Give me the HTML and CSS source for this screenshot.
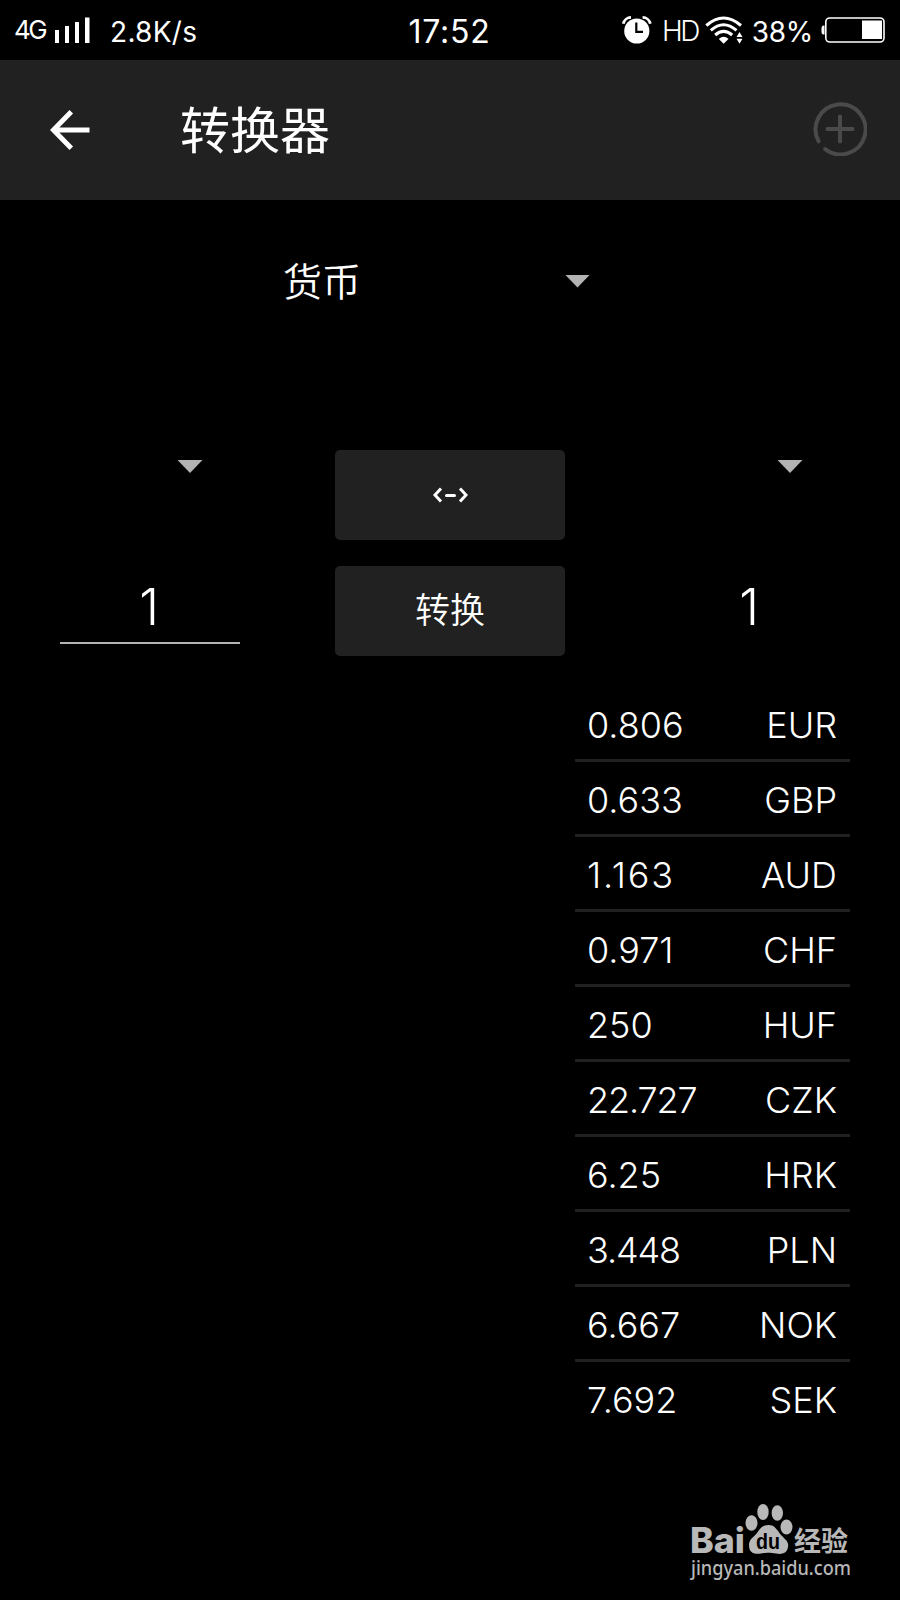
FILE: index.html
```html
<!DOCTYPE html>
<html lang="zh-CN">
<head>
    <meta charset="UTF-8">
    <meta name="viewport" content="width=device-width, initial-scale=1.0">
    <title>转换器</title>
    <link rel="stylesheet" href="styles.css">
</head>
<body>
    <div class="status-bar">
        <div class="status-left">
            <span class="network">4G</span>
            <svg class="signal" width="35" height="26" viewBox="0 0 35 26" fill="#fff">
                <rect x="0" y="13" width="4" height="13"/>
                <rect x="10" y="9" width="4" height="17"/>
                <rect x="20" y="5" width="4" height="21"/>
                <rect x="30" y="0.5" width="4.5" height="25.5"/>
            </svg>
            <span class="speed">2.8K/s</span>
        </div>
        <div class="time">17:52</div>
        <div class="status-right">
            <svg class="alarm" width="30" height="28" viewBox="0 0 30 28">
                <circle cx="14.8" cy="15" r="12.6" fill="#fff"/>
                <path d="M1.3 7.8A8 8 0 0 1 9 1.4M20.6 1.4A8 8 0 0 1 28.3 7.8" fill="none" stroke="#fff" stroke-width="2.8"/>
                <path d="M14.3 6.5V15.8H21" fill="none" stroke="#000" stroke-width="2.2"/>
            </svg>
            <span class="hd">HD</span>
            <svg class="wifi" width="39" height="28" viewBox="0 0 39 28">
                <path d="M1.3 9.5Q18.5 -5.5 36 9.5M5.8 14.4Q18.5 3.2 31.5 14.4M10.2 19Q18.5 11.8 27.2 19" fill="none" stroke="#fff" stroke-width="3"/>
                <path d="M13.8 23Q18.6 18.5 23.5 23L18.6 27.8Z" fill="#fff"/>
                <path d="M31.5 21L34.5 16L37.5 21ZM31.5 22.8H37.5L34.5 27.8Z" fill="#fff"/>
            </svg>
            <span class="percent">38%</span>
            <svg class="battery" width="64" height="26" viewBox="0 0 64 26">
                <path d="M3.5 8.5H2.5Q0.5 8.5 0.5 11V15Q0.5 17.5 2.5 17.5H3.5Z" fill="#fff"/>
                <rect x="4.8" y="1" width="58.2" height="24" rx="4" fill="none" stroke="#fff" stroke-width="1.6"/>
                <rect x="41" y="3.5" width="20" height="18.5" fill="#fff"/>
            </svg>
        </div>
    </div>

    <header class="header">
        <svg class="back" width="40" height="40" viewBox="0 0 40 40" fill="none" stroke="#fff" stroke-width="5">
            <path d="M39.5 20H4M21.3 1.8L3.4 20L21.3 38.2"/>
        </svg>
        <h1 class="title">转换器</h1>
        <svg class="add" width="54" height="54" viewBox="0 0 54 54" fill="none" stroke="#4a4a4a" stroke-width="4" stroke-linecap="round">
            <path d="M5.6 39.3A25 25 0 1 1 12.2 47.1M27 14.5V39.5M14.5 27H39.5"/>
        </svg>
    </header>

    <main class="converter">
        <div class="category">
            <span class="category-name">货币</span>
            <span class="caret"></span>
        </div>

        <div class="panel">
            <div class="side side-from">
                <span class="caret"></span>
                <div class="amount amount-input">1</div>
            </div>
            <div class="buttons">
                <button class="btn">
                    <svg width="36" height="16" viewBox="0 0 36 16" fill="none" stroke="#fff" stroke-width="3">
                        <path d="M9 1.5L3 8L9 14.5M28 1.5L34 8L28 14.5"/>
                        <path d="M14.5 8.5H22.5" stroke-linecap="round"/>
                    </svg>
                </button>
                <button class="btn btn-convert">转换</button>
            </div>
            <div class="side side-to">
                <span class="caret"></span>
                <div class="amount">1</div>
            </div>
        </div>

        <ul class="rates">
            <li><span class="value">0.806</span><span>EUR</span></li>
            <li><span class="value">0.633</span><span>GBP</span></li>
            <li><span class="value value-wide">1.163</span><span>AUD</span></li>
            <li><span class="value">0.971</span><span>CHF</span></li>
            <li><span class="value">250</span><span>HUF</span></li>
            <li><span class="value value-tight">22.727</span><span>CZK</span></li>
            <li><span class="value">6.25</span><span>HRK</span></li>
            <li><span class="value value-tight">3.448</span><span>PLN</span></li>
            <li><span class="value">6.667</span><span>NOK</span></li>
            <li><span class="value">7.692</span><span>SEK</span></li>
        </ul>
    </main>

    <svg class="watermark" width="170" height="80" viewBox="0 0 170 80" fill="#b8b8b8">
        <text class="wm-logo" x="0" y="49" textLength="55" lengthAdjust="spacingAndGlyphs">Bai</text>
        <ellipse cx="61.5" cy="19" rx="6" ry="7.7"/>
        <ellipse cx="73" cy="8" rx="5.7" ry="8"/>
        <ellipse cx="87.3" cy="9" rx="5.7" ry="7.8"/>
        <ellipse cx="96.5" cy="23" rx="6" ry="7.5"/>
        <path d="M78.5 21C85 21 87 26 91 31C96 36 99 38 98 43C97 50 91 50.5 86 49.5C80 48.5 77 48.5 71 49.5C64 50.5 59 49 59 41C59 35 64 33 67 29C70 25 72 21 78.5 21Z"/>
        <text class="wm-du" x="66" y="45" textLength="24" lengthAdjust="spacingAndGlyphs">du</text>
        <text class="wm-cn" x="104" y="47" textLength="54" lengthAdjust="spacingAndGlyphs">经验</text>
        <text class="wm-url" x="1" y="71" textLength="160" lengthAdjust="spacingAndGlyphs">jingyan.baidu.com</text>
    </svg>
</body>
</html>
```
FILE: styles.css
```css
/* General Styling */
* {
    box-sizing: border-box;
}

body {
    font-family: Inter, "Noto Sans CJK SC", sans-serif;
    margin: 0;
    height: 1600px;
    position: relative;
    background-color: #000;
    color: #fff;
    overflow: hidden;
}

svg {
    display: block;
    flex-shrink: 0;
}

/* Status Bar */
.status-bar {
    display: grid;
    grid-template-columns: 1fr auto 1fr;
    align-items: center;
    height: 60px;
    padding: 0 15px 0 14px;
    font-size: 28px;
    line-height: 40px;
    white-space: nowrap;
}

.status-left,
.status-right {
    display: flex;
    align-items: center;
}

.status-right {
    justify-content: flex-end;
}

.network {
    width: 32px;
    margin-right: 9px;
    font-size: 26px;
    letter-spacing: -2.5px;
}

.speed {
    margin-left: 20px;
    padding-top: 3px;
    letter-spacing: 0.3px;
}

.time {
    padding-top: 3px;
    font-size: 32px;
    letter-spacing: 0.8px;
}

.hd {
    margin: 0 7px 0 10px;
    padding-top: 1px;
    font-size: 28px;
    font-weight: 350;
    letter-spacing: -2.5px;
}

.percent {
    margin: 0 8px 0 8px;
    padding-top: 3px;
    letter-spacing: -0.3px;
}

/* Header */
.header {
    display: flex;
    align-items: center;
    height: 140px;
    padding: 0 33px 0 50px;
    background-color: #212121;
}

.title {
    margin: 0 auto 0 90px;
    padding-top: 1px;
    font-size: 50px;
    font-weight: 400;
    line-height: 70px;
}

.add {
    margin-bottom: 2px;
}

/* Converter */
.caret {
    width: 25px;
    height: 13px;
    background-color: #b3b3b3;
    clip-path: polygon(0 0, 100% 0, 50% 100%);
}

.category {
    display: flex;
    align-items: center;
    justify-content: space-between;
    width: 307px;
    height: 162px;
    margin-left: 283px;
}

.category-name {
    padding-bottom: 5px;
    font-size: 39px;
    font-weight: 350;
}

.panel {
    display: grid;
    grid-template-columns: 230px 230px 230px;
    justify-content: space-between;
    padding: 88px 35px 0;
}

.side {
    display: flex;
    flex-direction: column;
    align-items: center;
    padding-top: 10px;
}

.side .caret {
    margin-left: 80px;
}

.amount {
    width: 180px;
    height: 171px;
    padding: 104px 2px 0 0;
    font-size: 50px;
    font-weight: 350;
    line-height: 60px;
    text-align: center;
}

.amount-input {
    border-bottom: 2px solid #b3b3b3;
}

.buttons {
    display: flex;
    flex-direction: column;
    gap: 26px;
}

.btn {
    display: flex;
    align-items: center;
    justify-content: center;
    height: 90px;
    padding: 0;
    border: none;
    border-radius: 5px;
    background-color: #212121;
    color: #fff;
    font-family: inherit;
    font-size: 35px;
    line-height: 50px;
}

.btn-convert {
    padding-bottom: 3px;
    font-weight: 350;
}

/* Rates */
.rates {
    width: 275px;
    margin: 31px 50px 0 auto;
    padding: 0;
    list-style: none;
}

.rates li {
    display: flex;
    justify-content: space-between;
    height: 75px;
    padding: 16px 13px 0 12px;
    border-bottom: 3px solid #212121;
    font-size: 36px;
    font-weight: 300;
    line-height: 44px;
}

.rates li:last-child {
    border-bottom: none;
}

.value-wide {
    letter-spacing: 1.8px;
}

.value-tight {
    letter-spacing: -1.1px;
}

/* Watermark */
.watermark {
    position: absolute;
    left: 690px;
    top: 1504px;
    overflow: visible;
}

.wm-logo {
    font: 800 35px Inter, sans-serif;
}

.wm-du {
    font: bold 22px "Liberation Sans", sans-serif;
    fill: #000;
}

.wm-cn {
    font: bold 27px "Noto Sans CJK SC", sans-serif;
}

.wm-url {
    font: 500 20px "Noto Sans", sans-serif;
}
```
